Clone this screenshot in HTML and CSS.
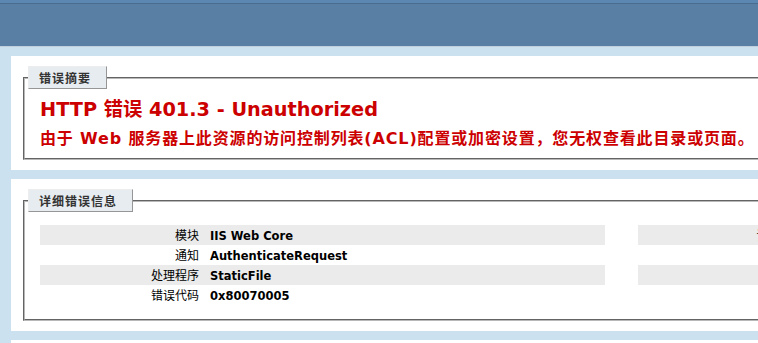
FILE: index.html
```html
<!DOCTYPE html>
<html lang="zh-CN">
<head>
  <meta charset="UTF-8">
  <title>IIS 7.5 详细错误 - 401.3 - Unauthorized</title>
  <link rel="stylesheet" href="styles.css">
</head>
<body>
  <!-- 頂部標題列 (只露出下緣) -->
  <div class="header"></div>
  <div class="server-version"></div>

  <div class="content">
    <!-- 錯誤摘要 -->
    <div class="content-container">
      <fieldset>
        <legend>错误摘要</legend>
        <h2>HTTP 错误 401.3 - Unauthorized</h2>
        <h3>由于 Web 服务器上此资源的访问控制列表(ACL)配置或加密设置，您无权查看此目录或页面。</h3>
      </fieldset>
    </div>

    <!-- 詳細錯誤信息 -->
    <div class="content-container">
      <fieldset>
        <legend>详细错误信息</legend>
        <div class="details">
          <div class="details-left">
            <table>
              <tr class="alt"><th>模块</th><td>IIS Web Core</td></tr>
              <tr><th>通知</th><td>AuthenticateRequest</td></tr>
              <tr class="alt"><th>处理程序</th><td>StaticFile</td></tr>
              <tr><th>错误代码</th><td>0x80070005</td></tr>
            </table>
          </div>
          <div class="details-right">
            <table>
              <tr class="alt"><th>请求的 URL</th><td></td></tr>
              <tr><th>物理路径</th><td></td></tr>
              <tr class="alt"><th>登录方法</th><td></td></tr>
              <tr><th>登录用户</th><td></td></tr>
            </table>
          </div>
        </div>
      </fieldset>
    </div>

    <div class="content-container"></div>
  </div>
</body>
</html>
```

FILE: styles.css
```css
html, body {
  overflow: hidden;
}
body {
  margin: 0;
  font-size: 11.2px;
  font-family: 'DejaVu Sans', 'Noto Sans CJK SC', sans-serif;
  background: #CBE1EF;
  color: #000;
}
.header {
  height: 3px;
  background: #5C87B2;
}
.server-version {
  height: 42px;
  background: #5A7FA5;
  border-top: 1px solid #4A6C8E;
  border-bottom: 1px solid #C1CFDD;
}
.content {
  padding-left: 11px;
  width: 1700px;
}
.content-container {
  background: #FFF;
  margin-top: 9px;
  padding: 10px;
  min-height: 40px;
}
fieldset {
  margin: 0 2px;
  padding: 0 15px 10px 15px;
  border: 2px groove #b8b8b8;
}
legend {
  color: #333333;
  padding: 4px 15px 4px 10px;
  margin: 0 0 8px -12px;
  border-top: 1px solid #EDEDED;
  border-left: 1px solid #EDEDED;
  border-right: 1px solid #969696;
  border-bottom: 1px solid #969696;
  background: #E7ECF0;
  font-weight: bold;
  font-size: 12px;
  line-height: 13px;
  letter-spacing: 1px;
  font-family: 'Noto Sans CJK SC', sans-serif;
}
h2 {
  font-size: 19.3px;
  line-height: 22px;
  margin: 2px 0 0 0;
  color: #CC0000;
}
h3 {
  font-size: 16px;
  line-height: 19px;
  margin: 8px 0 0 0;
  color: #CC0000;
  letter-spacing: 0.85px;
  white-space: nowrap;
}
.details {
  display: flex;
}
.details-left {
  width: 565px;
  margin-right: 33px;
  flex: none;
}
.details-right {
  width: 1000px;
  flex: none;
}
table {
  margin: 5px 0 4px 0;
  width: 100%;
  border: none;
  border-spacing: 0;
}
td, th {
  vertical-align: top;
  padding: 4px 0 2px 0;
  line-height: 14px;
  text-align: left;
  border: none;
  height: 14px;
}
th {
  width: 159px;
  text-align: right;
  padding-right: 11px;
  font-weight: normal;
  font-size: 12px;
  white-space: nowrap;
}
td {
  font-weight: bold;
  font-size: 11.5px;
}
.details-right th {
  width: 182px;
}
tr.alt th, tr.alt td {
  background: #EBEBEB;
}
```
